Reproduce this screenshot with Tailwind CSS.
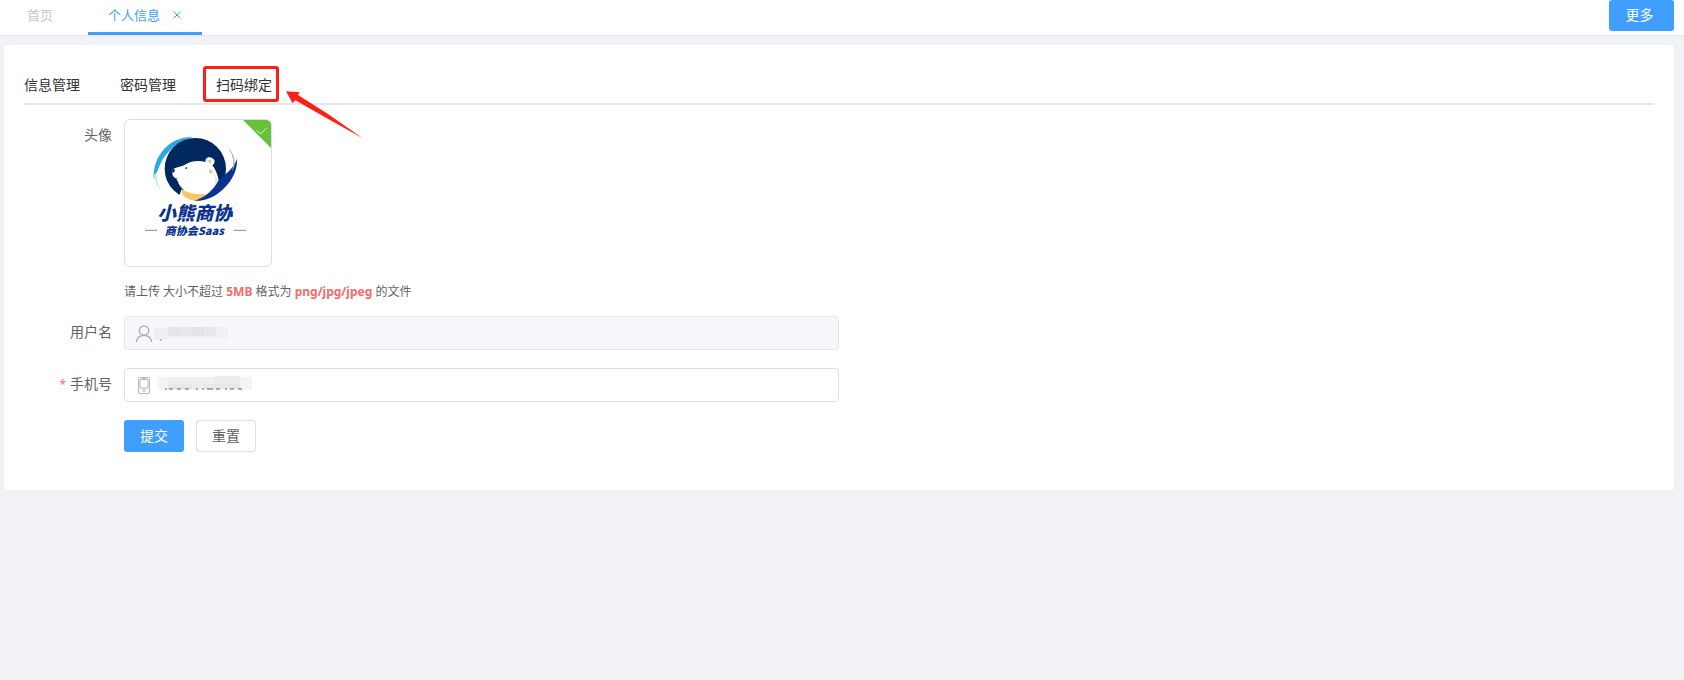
<!DOCTYPE html>
<html lang="zh-CN">
<head>
<meta charset="utf-8">
<meta name="viewport" content="width=device-width, initial-scale=1">
<title>个人信息</title>
<script src="https://cdn.jsdelivr.net/npm/@tailwindcss/browser@4"></script>
</head>
<body class="min-h-screen bg-[#f0f2f5] font-['Noto_Sans','Noto_Sans_CJK_SC',sans-serif] text-sm text-[#606266]">
<header class="flex h-9 items-start border-b border-[#e4e7ed] bg-white pr-[10px] text-[13px]">
  <nav class="flex flex-1">
    <a href="#" class="flex h-[35px] w-[88px] items-center pb-[5px] pl-[27px] text-[#c8c9cc]">首页</a>
    <div class="flex h-[35px] items-center gap-3 border-b-3 border-[#409eff] px-5 pb-[2px] text-[#409eff]">
      <a href="#">个人信息</a>
      <button type="button" aria-label="关闭" class="flex size-[10px] items-center justify-center">
        <svg class="size-2" viewBox="0 0 8 8" fill="none" stroke="currentColor"><path d="M.5.5l7 7M7.5.5l-7 7"/></svg>
      </button>
    </div>
  </nav>
  <button type="button" class="h-[31px] w-[65px] rounded-[3px] bg-[#409eff] pr-1 pb-[2px] text-sm text-white">更多</button>
</header>

<main class="mt-[9px] mr-[10px] ml-1 rounded bg-white px-5 pt-5 pb-[38px]">
  <nav class="flex h-10 items-center gap-10 border-b-2 border-[#e4e7ed] pt-[2px] text-[#303133]">
    <a href="#">信息管理</a>
    <a href="#">密码管理</a>
    <a href="#" class="relative">扫码绑定
      <span class="absolute -top-[9px] -left-[13px] h-9 w-[76px] rounded-[3px] border-3 border-[#ff2015]"></span>
      <svg class="absolute top-4 left-[70px] h-12 w-[78px]" viewBox="858 271 234 144" fill="#ff2015" aria-hidden="true"><path d="M858 272L899 275L894 283L985 341L1088 413L978 351L886 299L878 308Z"/></svg>
    </a>
  </nav>

  <form class="mt-[14px] w-1/2 min-w-[400px]">
    <div class="flex">
      <span class="w-[100px] shrink-0 pt-1 pr-3 text-right leading-6">头像</span>
      <div>
        <div class="relative size-[148px] overflow-hidden rounded-md border border-[#dcdfe6]">
          <svg class="size-full" viewBox="45 30 438 438" role="img" aria-label="小熊商协">
            <path d="M131 207C128 137 178 79 250 81C213 91 169 121 151 162C142 182 138 197 131 207Z" fill="#2ba7e3"/>
            <path d="M132 196C134 218 143 232 156 243C144 228 139 207 140 185Z" fill="#cbe6f5"/>
            <circle cx="256" cy="176" r="92" fill="#00285f"/>
            <path d="M208 257L214 240H325L340 222Q317 280 260 274Q225 276 208 257Z" fill="#fff"/>
            <path d="M188 178C197 171 213 171 222 166C239 154 263 150 287 156C283 145 298 137 309 146C318 152 313 162 307 166C322 185 331 215 325 245Q286 263 240 252Q214 239 205 219C204 208 190 205 187 193Z" fill="#fff"/>
            <path d="M307 180Q321 207 310 243L322 244Q331 213 307 180Z" fill="#e5e8ec"/>
            <path d="M187 178Q192 175 195 181Q192 191 187 187ZM190 202Q198 207 204 204L200 208Q193 208 190 202ZM224 175l8-5-2 7z" fill="#18243d"/>
            <path d="M291 151Q301 147 304 153L303 163Q296 156 291 151ZM298 177Q309 178 308 187Q300 195 296 186Z" fill="#d8c9b3"/>
            <path d="M214 237Q242 257 304 252Q286 276 246 271Q212 262 214 237Z" fill="#f9c765"/>
            <path d="M381 146C383 184 363 220 325 250C297 270 275 274 252 272C284 263 310 241 325 212C335 200 374 175 381 146Z" fill="#0b3290"/>
            <path d="M356 113Q386 149 366 184Q377 150 356 113Z" fill="#a6b9d8"/>
            <g fill="#0b3290" font-family="'Noto Sans CJK SC', sans-serif" font-weight="900" font-style="italic" text-anchor="middle">
              <text x="254" y="331" font-size="56">小熊商协</text>
              <text x="253" y="375" font-size="33">商协会Saas</text>
            </g>
            <path d="M105 361h37M371 361h37" stroke="#7788b9" stroke-width="3"/>
          </svg>
          <svg class="absolute top-0 right-0 size-7" viewBox="0 0 28 28" fill="none" aria-label="上传成功"><path d="M0 0H28V28Z" fill="#67c23a"/><path d="M14 10.500l3.500 3.500 6-6" stroke="#d8efcd"/></svg>
        </div>
        <p class="mt-4 text-xs leading-[18px]">请上传 大小不超过 <b class="font-bold text-[#f56c6c]">5MB</b> 格式为 <b class="font-bold text-[#f56c6c]">png/jpg/jpeg</b> 的文件</p>
      </div>
    </div>

    <div class="mt-[15px] flex">
      <label for="username" class="w-[100px] shrink-0 pr-3 text-right leading-8">用户名</label>
      <div class="relative flex-1">
        <input id="username" type="text" disabled class="block h-[34px] w-full rounded border border-[#e4e7ed] bg-[#f5f7fa] pl-[30px]">
        <svg class="absolute top-[9px] left-3 h-[17px] w-4" viewBox="0 0 16 17" fill="none" stroke="#a8abb2" stroke-width="1.300" aria-hidden="true"><circle cx="8" cy="5.500" r="4.700"/><path d="M.7 17C.7 12.500 4 10.300 8 10.300S15.300 12.500 15.300 17"/></svg>
        <svg class="absolute top-[9px] left-[29px] h-4 w-[76px]" viewBox="0 0 76 16" aria-hidden="true">
          <path d="M1 3H15V15H1Z" fill="#eeeff2"/><path d="M15 2H27V11H15Z" fill="#e3e5e8"/><path d="M27 2H39V11H27Z" fill="#e6e8eb"/><path d="M39 2H51V11H39Z" fill="#e1e3e6"/><path d="M51 2H63V11H51Z" fill="#e6e9ec"/><path d="M63 2H75V13H63ZM15 11H63V13H15Z" fill="#eff1f4"/><path d="M7 15h2" stroke="#85878b"/>
        </svg>
      </div>
    </div>

    <div class="mt-[18px] flex">
      <label for="phone" class="w-[100px] shrink-0 pr-3 text-right leading-8"><span class="mr-1 text-xs text-[#f56c6c]">*</span>手机号</label>
      <div class="relative flex-1">
        <input id="phone" type="tel" required class="block h-[34px] w-full rounded border border-[#dcdfe6] bg-white pl-[30px]">
        <svg class="absolute top-[9px] left-[14px] h-[17px] w-3" viewBox="0 0 12 17" fill="none" stroke="#b4b6bb" aria-hidden="true"><rect x=".5" y=".5" width="11" height="16" rx="1"/><path d="M2 2.500h8v8.500h-8zM4 1.500h4"/><circle cx="6" cy="13.500" r="1"/></svg>
        <svg class="absolute top-2 left-[34px] h-4 w-[95px]" viewBox="0 0 95 16" aria-hidden="true">
          <path d="M0 1H94V14H0Z" fill="#f4f4f4"/><path d="M10 1H56V8H10Z" fill="#efefee"/><path d="M56 0H82V8H56Z" fill="#ececeb"/><path d="M10 8H34V13H10ZM46 8H82V13H46Z" fill="#e7e7e9"/><path d="M34 8H46V13H34Z" fill="#ededed"/>
          <path d="M7 13h2M11 13h4M19 13h4M27 13h4M38 13h2M44 13h2M49 13h6M58 13h4M67 13h2M72 13h4M80 13h4" stroke="#606266"/>
        </svg>
      </div>
    </div>

    <div class="mt-[18px] flex gap-3 pl-[100px]">
      <button type="submit" class="h-8 w-[60px] rounded-[3px] bg-[#409eff] text-white">提交</button>
      <button type="reset" class="h-8 w-[60px] rounded-[3px] border border-[#dcdfe6] bg-white">重置</button>
    </div>
  </form>
</main>
</body>
</html>
